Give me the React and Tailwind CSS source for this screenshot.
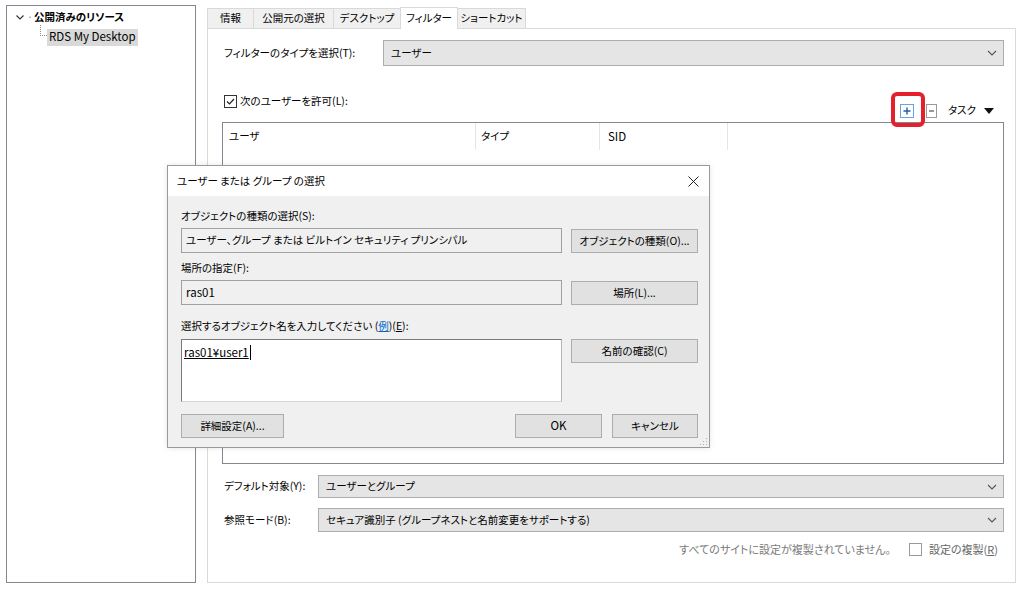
import React from 'react';

const font = "font-['Noto_Sans_CJK_JP','Noto_Sans',sans-serif] [font-feature-settings:'palt']";

function Chevron() {
  return (
    <svg width="10" height="6" viewBox="0 0 10 6" className="shrink-0">
      <path d="M1 1l4 4 4-4" fill="none" stroke="#555" strokeWidth="1.1" />
    </svg>
  );
}

function Combo({ children, className = '' }) {
  return (
    <div className={`flex items-center bg-[#e5e5e5] border border-[#adadad] pl-[7px] pr-[6px] ${className}`}>
      <span className="flex-1 leading-none">{children}</span>
      <Chevron />
    </div>
  );
}

function Btn({ children, className = '' }) {
  return (
    <div className={`h-[24px] flex items-center justify-center bg-[#e1e1e1] border border-[#adadad] leading-none ${className}`}>
      {children}
    </div>
  );
}

function Tab({ label, active, w }) {
  if (active) {
    return (
      <div className={`relative z-10 h-[22px] -mb-px bg-white border border-b-0 border-[#d9d9d9] flex items-center justify-center leading-none ${w}`}>
        {label}
      </div>
    );
  }
  return (
    <div className={`h-[20px] bg-[#f0f0f0] border border-b-0 border-[#d9d9d9] -ml-px first:ml-0 flex items-center justify-center leading-none ${w}`}>
      {label}
    </div>
  );
}

function SelectDialog() {
  return (
    <div className="absolute left-[167px] top-[165px] w-[543px] h-[283px] border border-[#9a9a9a] bg-[#f0f0f0] shadow-[0_0_6px_rgba(0,0,0,0.1)] flex flex-col">
      <div className="h-[30px] bg-white flex items-center pl-[9px] pr-[10px] shrink-0">
        <span className="flex-1 leading-none">ユーザー または グループ の選択</span>
        <svg width="11" height="11" viewBox="0 0 11 11">
          <path d="M0.5 0.5l10 10M10.5 0.5l-10 10" stroke="#222" strokeWidth="1" />
        </svg>
      </div>
      <div className="relative flex-1 pl-[13px] pr-[11px] pt-[12px]">
        <div className="h-[16px] flex items-center leading-none">オブジェクトの種類の選択(S):</div>
        <div className="mt-[4px] flex gap-[9px]">
          <div className="w-[381px] h-[25px] border border-[#a0a0a0] flex items-center pl-[4px] leading-none">
            ユーザー、グループ または ビルトイン セキュリティ プリンシパル
          </div>
          <Btn className="w-[127px] mt-px">オブジェクトの種類(O)...</Btn>
        </div>
        <div className="mt-[7px] h-[16px] flex items-center leading-none">場所の指定(F):</div>
        <div className="mt-[4px] flex gap-[9px]">
          <div className="w-[381px] h-[25px] border border-[#a0a0a0] flex items-center pl-[4px] leading-none text-[11.5px]">ras01</div>
          <Btn className="w-[127px] mt-px">場所(L)...</Btn>
        </div>
        <div className="mt-[13px] h-[16px] flex items-center leading-none">
          選択するオブジェクト名を入力してください (<span className="text-[#0066cc] underline">例</span>)(<span className="underline">E</span>):
        </div>
        <div className="mt-[5px] flex gap-[9px]">
          <div className="w-[381px] h-[63px] bg-white border border-[#7a7a7a] border-b-[#d6d6d6] border-r-[#b5b5b5] pl-[2px] pt-[5px]">
            <div className="flex items-center h-[15px] leading-none text-[11.5px]">
              <span className="underline">ras01¥user1</span>
              <span className="w-px h-[15px] bg-black ml-px" />
            </div>
          </div>
          <Btn className="w-[127px]">名前の確認(C)</Btn>
        </div>
        <div className="mt-[12px] flex">
          <Btn className="w-[103px]">詳細設定(A)...</Btn>
          <div className="flex-1" />
          <Btn className="w-[87px] text-[11.5px]">OK</Btn>
          <Btn className="w-[86px] ml-[10px]">キャンセル</Btn>
        </div>
        <svg className="absolute right-[1px] bottom-[1px]" width="9" height="9" viewBox="0 0 9 9">
          <g fill="#b0b0b0">
            <rect x="7" y="1" width="1" height="1" />
            <rect x="4" y="4" width="1" height="1" />
            <rect x="7" y="4" width="1" height="1" />
            <rect x="1" y="7" width="1" height="1" />
            <rect x="4" y="7" width="1" height="1" />
            <rect x="7" y="7" width="1" height="1" />
          </g>
        </svg>
      </div>
    </div>
  );
}

export default function App() {
  return (
    <div className={`relative w-[1024px] h-[590px] bg-white text-[10.5px] text-black overflow-hidden whitespace-nowrap flex ${font}`}>
      {/* tree */}
      <div className="ml-[6px] mt-[5px] w-[190px] h-[578px] border border-[#828790] pt-[2px]">
        <div className="flex items-center h-[18px] pl-[9px]">
          <svg width="8" height="5" viewBox="0 0 8 5">
            <path d="M0.5 0.5l3.5 3.5 3.5-3.5" fill="none" stroke="#333" strokeWidth="1.1" />
          </svg>
          <span className="ml-[3px] text-[#888] leading-none">·</span>
          <span className="ml-px font-bold leading-none">公開済みのリソース</span>
        </div>
        <div className="flex items-center h-[18px] pl-[33px] mt-[2px]">
          <svg width="7" height="18" viewBox="0 0 7 18" className="self-start -mt-[4px]">
            <g fill="#8a8a8a">
              <rect x="0" y="1" width="1" height="1" />
              <rect x="0" y="3" width="1" height="1" />
              <rect x="0" y="5" width="1" height="1" />
              <rect x="0" y="7" width="1" height="1" />
              <rect x="0" y="9" width="1" height="1" />
              <rect x="0" y="11" width="1" height="1" />
              <rect x="2" y="11" width="1" height="1" />
              <rect x="4" y="11" width="1" height="1" />
              <rect x="6" y="11" width="1" height="1" />
            </g>
          </svg>
          <span className="bg-[#d9d9d9] h-[17px] flex items-center px-[2px] leading-none text-[11.5px]">RDS My Desktop</span>
        </div>
      </div>

      {/* tab control */}
      <div className="ml-[11px] mt-[7px] w-[809px] flex flex-col">
        <div className="h-[21px] flex items-end">
          <Tab label="情報" w="w-[47px]" />
          <Tab label="公開元の選択" w="w-[81px]" />
          <Tab label="デスクトップ" w="w-[68px]" />
          <Tab label="フィルター" active w="w-[58px] -ml-px" />
          <Tab label="ショートカット" w="w-[69px]" />
        </div>
        <div className="h-[555px] border border-[#d9d9d9] pl-[14px] pr-[11px] pt-[11px]">
          <div className="flex h-[26px] items-center">
            <span className="w-[161px] pl-[2px] leading-none">フィルターのタイプを選択(T):</span>
            <Combo className="flex-1 h-[26px]">ユーザー</Combo>
          </div>

          <div className="h-[56px] flex">
            <div className="pt-[29px] pl-[2px] flex items-start">
              <div className="flex items-center h-[13px]">
                <svg width="13" height="13" viewBox="0 0 13 13">
                  <rect x="0.5" y="0.5" width="12" height="12" fill="white" stroke="#333" />
                  <path d="M3 6.5l2.5 2.5 4.5-5" fill="none" stroke="#222" strokeWidth="1.2" />
                </svg>
                <span className="ml-[3px] leading-none">次のユーザーを許可(L):</span>
              </div>
            </div>
            <div className="flex-1" />
            <div className="pt-[38px] pr-[10px] flex items-start">
              <div className="flex items-center h-[13px]">
                <svg width="14" height="14" viewBox="0 0 14 14">
                  <rect x="0.5" y="0.5" width="13" height="13" fill="white" stroke="#6aa4d8" />
                  <path d="M7 3.5v7M3.5 7h7" stroke="#1f5fa8" strokeWidth="1.4" />
                </svg>
                <svg width="11" height="14" viewBox="0 0 11 14" className="ml-[12px]">
                  <rect x="0.5" y="0.5" width="10" height="13" fill="white" stroke="#9a9a9a" />
                  <path d="M3 7h5" stroke="#555" strokeWidth="1.2" />
                </svg>
                <span className="ml-[11px] leading-none">タスク</span>
                <svg width="10" height="6" viewBox="0 0 10 6" className="ml-[8px]">
                  <path d="M0 0h10l-5 6z" fill="#111" />
                </svg>
              </div>
            </div>
          </div>

          <div className="h-[342px] border border-[#828790]">
            <div className="h-[27px] flex">
              <div className="w-[253px] h-full border-r border-[#e5e5e5] flex items-center pl-[6px] leading-none">ユーザ</div>
              <div className="w-[124px] h-full border-r border-[#e5e5e5] flex items-center pl-[5px] leading-none">タイプ</div>
              <div className="w-[128px] h-full border-r border-[#e5e5e5] flex items-center pl-[8px] leading-none text-[11.5px]">SID</div>
            </div>
          </div>

          <div className="mt-[11px] flex items-center h-[23px]">
            <span className="w-[96px] pl-[2px] leading-none">デフォルト対象(Y):</span>
            <Combo className="flex-1 h-[23px]">ユーザーとグループ</Combo>
          </div>
          <div className="mt-[10px] flex items-center h-[24px]">
            <span className="w-[96px] pl-[2px] leading-none">参照モード(B):</span>
            <Combo className="flex-1 h-[24px]">セキュア識別子 (グループネストと名前変更をサポートする)</Combo>
          </div>

          <div className="mt-[9px] h-[16px] flex items-center justify-end pr-[6px]">
            <span className="text-[#7a7a7a] leading-none text-[11px]">すべてのサイトに設定が複製されていません。</span>
            <span className="ml-[18px] w-[13px] h-[13px] border border-[#9a9a9a] bg-white" />
            <span className="ml-[7px] text-[#666] leading-none text-[11px]">
              設定の複製(<span className="underline">R</span>)
            </span>
          </div>
        </div>
      </div>

      <SelectDialog />

      {/* annotation */}
      <div className="absolute left-[891px] top-[92px] w-[34px] h-[35px] border-[4px] border-[#e3202b] rounded-[6px]" />
    </div>
  );
}
